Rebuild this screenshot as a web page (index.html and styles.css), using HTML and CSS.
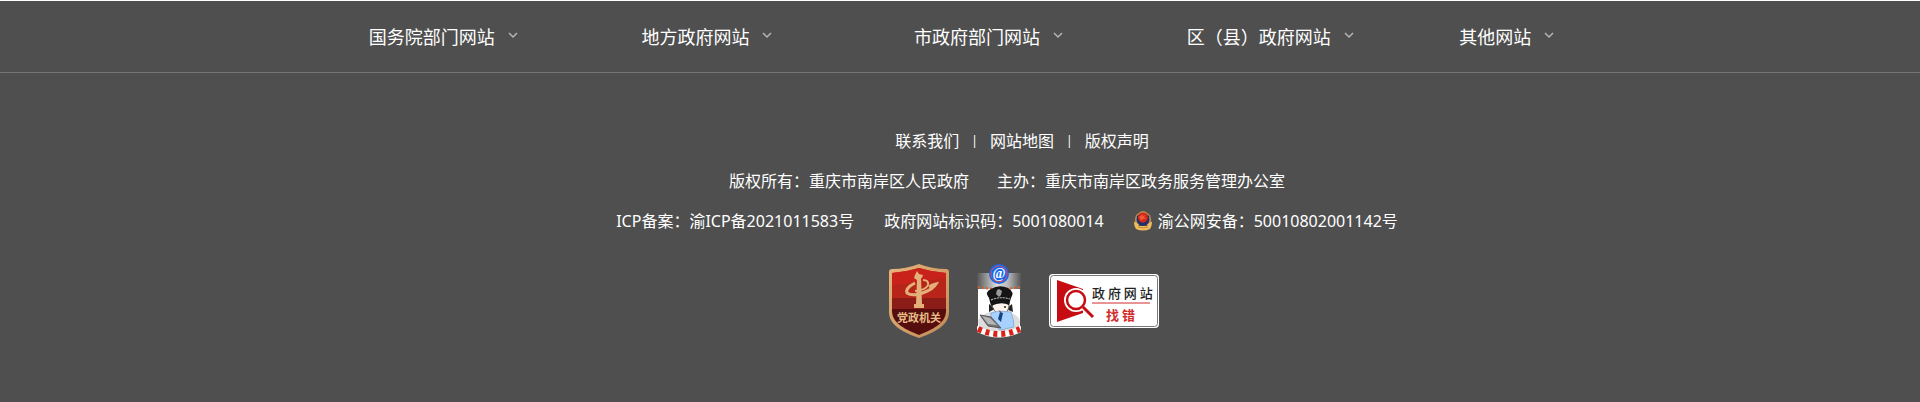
FILE: index.html
```html
<!DOCTYPE html>
<html lang="zh-CN">
<head>
<meta charset="utf-8">
<meta name="viewport" content="width=device-width, initial-scale=1">
<title>重庆市南岸区人民政府</title>
<link rel="stylesheet" href="styles.css">
</head>
<body>
<footer class="footer">
  <nav class="sites" aria-label="网站导航">
    <div class="sites-list">
      <button class="site" type="button">国务院部门网站<svg class="chevron" viewBox="0 0 10 8" aria-hidden="true"><path d="M1 1l4 4 4-4"/></svg></button>
      <button class="site" type="button">地方政府网站<svg class="chevron" viewBox="0 0 10 8" aria-hidden="true"><path d="M1 1l4 4 4-4"/></svg></button>
      <button class="site" type="button">市政府部门网站<svg class="chevron" viewBox="0 0 10 8" aria-hidden="true"><path d="M1 1l4 4 4-4"/></svg></button>
      <button class="site" type="button">区（县）政府网站<svg class="chevron" viewBox="0 0 10 8" aria-hidden="true"><path d="M1 1l4 4 4-4"/></svg></button>
      <button class="site" type="button">其他网站<svg class="chevron" viewBox="0 0 10 8" aria-hidden="true"><path d="M1 1l4 4 4-4"/></svg></button>
    </div>
  </nav>
  <div class="info">
    <div class="row links">
      <a href="#">联系我们</a><span class="bar">|</span><a href="#">网站地图</a><span class="bar">|</span><a href="#">版权声明</a>
    </div>
    <div class="row">
      <span>版权所有：重庆市南岸区人民政府</span>
      <span>主办：重庆市南岸区政务服务管理办公室</span>
    </div>
    <div class="row records">
      <a href="#">ICP备案：渝ICP备2021011583号</a>
      <span>政府网站标识码：5001080014</span>
      <a class="police" href="#">
        <svg class="emblem" viewBox="0 0 18 20" aria-hidden="true">
          <path d="M6 1Q9-1 12 1L16 4Q18 9 17 14H1Q0 9 2 4z" fill="#b98a4c"/>
          <path d="M3 5Q1 14 9 15Q17 14 15 5L12 3H6z" fill="#20306f"/>
          <path d="M5 3Q9 0 13 3L14 7Q13 11 9 12Q5 11 4 7z" fill="#d5261c"/>
          <path d="M8 3l1 2 3-1-2 2 2 2-3 0-2 2-1-3-2-1 3-1z" fill="#f4582c"/>
          <path d="M0 11Q3 11 5 15H13Q15 11 18 11Q18 15 16 18Q9 21 2 18Q0 15 0 11z" fill="#f0bd5e"/>
          <path d="M4 16Q9 18 14 16" fill="none" stroke="#c98a35"/>
        </svg>渝公网安备：50010802001142号</a>
    </div>
    <div class="badges">
      <a href="#" aria-label="党政机关">
        <svg class="shield" viewBox="0 0 60 74">
          <defs>
            <linearGradient id="gold" x1="0" y1="0" x2="1" y2="1"><stop offset="0" stop-color="#e8b47c"/><stop offset=".5" stop-color="#d5a068"/><stop offset="1" stop-color="#c08a58"/></linearGradient>
            <clipPath id="shield-face"><path d="M30 4Q43 8 57 9V47C57 60 42 66 30 71C18 66 3 60 3 47V9Q17 8 30 4z"/></clipPath>
          </defs>
          <path d="M30 0Q43 5 57 5Q60 5 60 8V48C60 62 44 69 30 74C16 69 0 62 0 48V8Q0 5 3 5Q17 5 30 0z" fill="url(#gold)"/>
          <g clip-path="url(#shield-face)">
            <path d="M0 0H60V34H0z" fill="#b7251a"/>
            <path d="M0 0H60V13L0 22z" fill="#c9221a"/>
            <path d="M0 34H60V45H0z" fill="#8c1c18"/>
            <path d="M0 45H60V74H0z" fill="#560d0e"/>
          </g>
          <path d="M28 7l2 3 4 1-1 3h-1l1 26h2v4H25v-4h2l1-24-3-2 1-3z" fill="#e3b07a"/>
          <path d="M34 16Q40 16 39 21Q37 26 26 27" fill="none" stroke="#e3b07a" stroke-width="2"/>
          <path d="M26 19Q16 24 18 29Q24 33 36 28Q44 25 47 20Q43 21 40 23" fill="none" stroke="#e3b07a" stroke-width="3"/>
          <text x="30" y="58" class="shield-text">党政机关</text>
        </svg>
      </a>
      <a href="#" aria-label="网络警察">
        <svg class="officer" viewBox="0 0 44 74">
          <defs><linearGradient id="steel"><stop offset="0" stop-color="#555"/><stop offset=".45" stop-color="#ddd"/><stop offset=".7" stop-color="#bbb"/><stop offset="1" stop-color="#555"/></linearGradient></defs>
          <path d="M0 9H44V25H0z" fill="url(#steel)"/>
          <path d="M1 25H43V66H1z" fill="#fff"/>
          <path d="M1 23Q22 27 43 23" fill="none" stroke="#d2622d" stroke-width="2" stroke-dasharray="2 2"/>
          <ellipse cx="22" cy="58" rx="21" ry="11" fill="#ddd"/>
          <path d="M0 62Q22 73 44 62V68Q22 79 0 68z" fill="#fff"/>
          <path d="M1 65Q22 75 43 65" fill="none" stroke="#dc2018" stroke-width="6" stroke-dasharray="4 4"/>
          <circle cx="22" cy="10" r="10" fill="#1769ef"/>
          <circle cx="22" cy="10" r="8" fill="none" stroke="#d84960"/>
          <text x="22" y="14" class="at">@</text>
          <path d="M12 40l6 5-6 3zM35 40l-6 5 7 3z" fill="#222"/>
          <path d="M15 38H32Q33 50 24 50Q15 49 15 38z" fill="#fff5ed" stroke="#555"/>
          <path d="M14 49L22 47 34 48Q37 56 37 63L23 66 14 58z" fill="#a7d2ff" stroke="#8fb1d5"/>
          <path d="M23 48l-2 7 3 3 2-9z" fill="#164282"/>
          <path d="M3 51L14 53 24 64 11 62z" fill="#777" stroke="#555"/>
          <path d="M5 52L13 54 20 61 11 60z" fill="#b5b5b5"/>
          <path d="M12 34Q7 28 14 25Q22 20 31 24Q38 28 34 34L32 41Q24 37 14 42z" fill="#151515"/>
          <path d="M14 36Q23 32 33 35" fill="none" stroke="#ddd" stroke-width="1" stroke-dasharray="2 1"/>
          <path d="M22 25l3 2-1 4-2 2-3-3 1-4z" fill="#999"/>
          <circle cx="28" cy="43" r="1" fill="#222"/>
          <path d="M22 47l2 1" stroke="#a44"/>
        </svg>
      </a>
      <a href="#" aria-label="政府网站找错">
        <svg class="report" viewBox="0 0 110 54">
          <rect width="110" height="54" rx="4" fill="#fff"/>
          <rect x="1.5" y="1.5" width="107" height="51" rx="3" fill="none" stroke="#777"/>
          <path d="M8 6L34 15V39L8 48z" fill="#c60c12"/>
          <circle cx="27" cy="26" r="12" fill="#fff"/>
          <path d="M34 33L44 43" stroke="#fff" stroke-width="6"/>
          <circle cx="27" cy="26" r="9" fill="#fff" stroke="#c60c12" stroke-width="2.5"/>
          <path d="M34 33L44 43" stroke="#c60c12" stroke-width="3"/>
          <path d="M43 29H101" stroke="#d22b2b"/>
          <text x="43" y="24" class="report-top">政 府 网 站</text>
          <text x="57" y="46" class="report-bottom">找 错</text>
        </svg>
      </a>
    </div>
  </div>
</footer>
</body>
</html>
```
FILE: styles.css
```css
body {
  margin: 0;
  background: #4f4f4f;
  color: #fff;
  font: 16px/40px "Noto Sans", "Noto Sans CJK SC", sans-serif;
}
a { color: inherit; text-decoration: none; }
.footer { border-top: 1px solid #fff; }
.sites { border-bottom: 1px solid #757575; }
.sites-list {
  display: grid;
  grid-template-columns: repeat(5, 1fr);
  width: 71%;
  margin-left: 19%;
  padding: 15px 0 16px 4px;
}
.site {
  display: flex;
  align-items: center;
  gap: 13px;
  padding: 0;
  border: 0;
  background: none;
  color: inherit;
  font: 18px/40px "Noto Sans CJK SC", sans-serif;
  white-space: nowrap;
  cursor: pointer;
}
.chevron { width: 10px; height: 8px; fill: none; stroke: #b5b5b5; stroke-width: 1.5; }
.info { padding: 48px 0 63px 94px; }
.row { display: flex; justify-content: center; gap: 28px; white-space: nowrap; }
.links { gap: 12px; padding-left: 30px; }
.records { gap: 30px; }
.bar { font-size: 12px; }
.police { display: flex; align-items: center; gap: 6px; }
.emblem { width: 18px; height: 20px; }
.badges {
  display: flex;
  justify-content: center;
  align-items: center;
  gap: 28px;
  padding: 23px 0 0 34px;
}
.badges a, .badges svg { display: block; }
.shield { width: 60px; height: 74px; }
.officer { width: 44px; height: 74px; }
.report { width: 110px; height: 54px; }
.shield-text { font: 700 11px "Noto Sans CJK SC", sans-serif; fill: #e9bd88; text-anchor: middle; }
.at { font: 700 14px "Liberation Serif", serif; fill: #fff; text-anchor: middle; }
.report-top { font: 500 13px "Noto Sans CJK SC", sans-serif; fill: #222; }
.report-bottom { font: 700 13px "Noto Sans CJK SC", sans-serif; fill: #d22b2b; }
```
